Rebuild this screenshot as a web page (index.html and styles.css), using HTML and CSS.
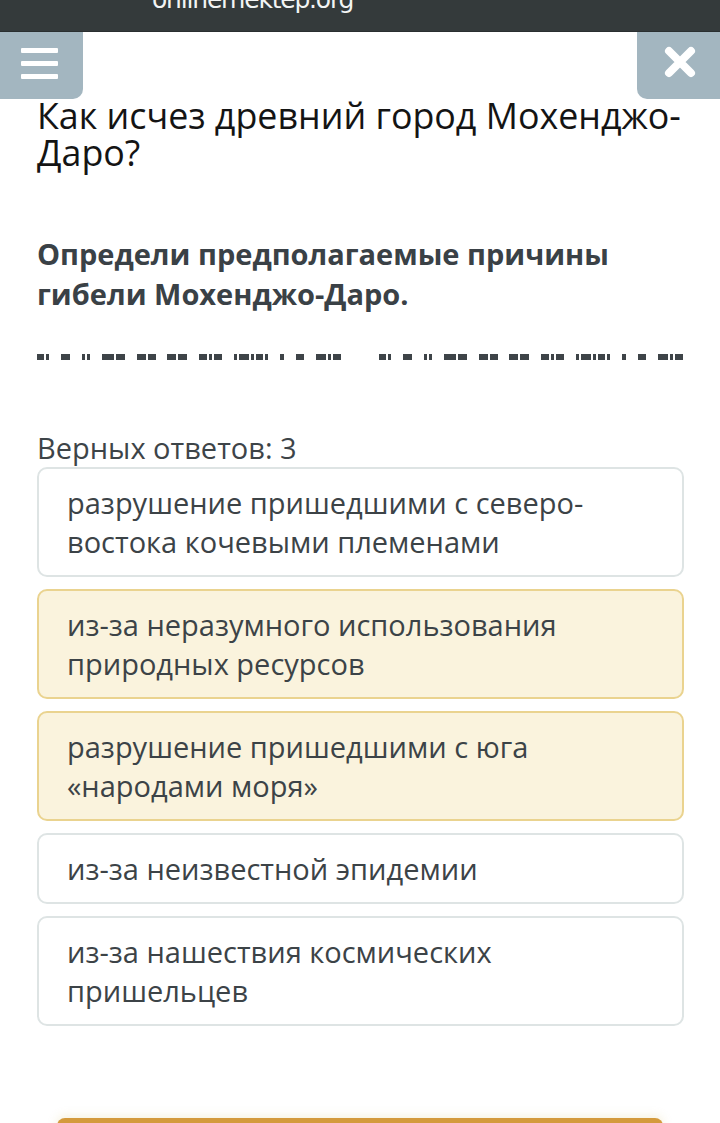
FILE: index.html
```html
<!DOCTYPE html>
<html lang="ru">
<head>
<meta charset="utf-8">
<title>Мохенджо-Даро</title>
<link rel="stylesheet" href="styles.css">
</head>
<body>
<header class="topbar"><span class="site">onlinemektep.org</span></header>
<div class="toolbar">
  <button class="tool menu" aria-label="menu">
    <span class="bar"></span><span class="bar"></span><span class="bar"></span>
  </button>
  <button class="tool close" aria-label="close">
    <svg width="32" height="32" viewBox="0 0 32 32"><path d="M5 5 L27 27 M27 5 L5 27" stroke="#fff" stroke-width="8" stroke-linecap="round"/></svg>
  </button>
</div>
<main class="content">
  <h1 class="title">Как исчез древний город Мохенджо-Даро?</h1>
  <p class="task">Определи предполагаемые причины гибели Мохенджо-Даро.</p>
  <div class="redacted">
    <div class="half">
      <span class="grp"><i style="width:7px"></i><i style="width:3px"></i></span>
      <span class="grp"><i style="width:9px"></i></span>
      <span class="grp"><i style="width:3px"></i><i style="width:3px"></i></span>
      <span class="grp"><i style="width:12px"></i><i style="width:9px"></i></span>
      <span class="grp"><i style="width:9px"></i><i style="width:8px"></i></span>
      <span class="grp"><i style="width:9px"></i><i style="width:9px"></i></span>
      <span class="grp"><i style="width:8px"></i><i style="width:3px"></i><i style="width:8px"></i></span>
      <span class="grp"><i style="width:3px"></i><i style="width:10px"></i><i style="width:3px"></i><i style="width:7px"></i><i style="width:3px"></i></span>
      <span class="grp"><i style="width:4px"></i></span>
      <span class="grp"><i style="width:8px"></i></span>
      <span class="grp"><i style="width:10px"></i><i style="width:3px"></i><i style="width:8px"></i></span>
    </div>
    <div class="half">
      <span class="grp"><i style="width:7px"></i><i style="width:3px"></i></span>
      <span class="grp"><i style="width:9px"></i></span>
      <span class="grp"><i style="width:3px"></i><i style="width:3px"></i></span>
      <span class="grp"><i style="width:12px"></i><i style="width:9px"></i></span>
      <span class="grp"><i style="width:9px"></i><i style="width:8px"></i></span>
      <span class="grp"><i style="width:9px"></i><i style="width:9px"></i></span>
      <span class="grp"><i style="width:8px"></i><i style="width:3px"></i><i style="width:8px"></i></span>
      <span class="grp"><i style="width:3px"></i><i style="width:10px"></i><i style="width:3px"></i><i style="width:7px"></i><i style="width:3px"></i></span>
      <span class="grp"><i style="width:4px"></i></span>
      <span class="grp"><i style="width:8px"></i></span>
      <span class="grp"><i style="width:10px"></i><i style="width:3px"></i><i style="width:8px"></i></span>
    </div>
  </div>
  <p class="count">Верных ответов: 3</p>
  <ul class="options">
    <li class="option">разрушение пришедшими с северо-востока кочевыми племенами</li>
    <li class="option selected">из-за неразумного использования природных ресурсов</li>
    <li class="option selected">разрушение пришедшими с юга «народами моря»</li>
    <li class="option">из-за неизвестной эпидемии</li>
    <li class="option">из-за нашествия космических пришельцев</li>
  </ul>
  <div class="submit-wrap"><div class="submit"></div></div>
</main>
</body>
</html>
```
FILE: styles.css
```css
* { box-sizing: border-box; }
html, body { margin: 0; padding: 0; background: #fff; }
body {
  font-family: "Open Sans", "Noto Sans", sans-serif;
  width: 720px;
  height: 1123px;
  overflow: hidden;
}
.topbar {
  height: 32px;
  background: #343a3b;
  overflow: hidden;
  border-bottom: 1px solid #2a2f30;
}
.site {
  display: block;
  margin-left: 152px;
  margin-top: -15px;
  font-family: "DejaVu Sans", sans-serif;
  font-size: 25px;
  line-height: 30px;
  letter-spacing: -1.2px;
  color: #f2f4f4;
}
.toolbar {
  display: flex;
  justify-content: space-between;
  height: 67px;
}
.tool {
  border: none;
  padding: 0;
  width: 83px;
  height: 67px;
  background: #a3b6c0;
  display: flex;
  align-items: center;
  justify-content: center;
}
.menu {
  flex-direction: column;
  gap: 8px;
  border-radius: 0 0 10px 0;
  padding-right: 4px;
  padding-bottom: 4px;
}
.bar {
  display: block;
  width: 37px;
  height: 5px;
  background: #fff;
  border-radius: 1px;
}
.close {
  border-radius: 0 0 0 10px;
  padding-left: 2px;
  padding-bottom: 8px;
}
.content {
  padding: 0 37px;
}
.title {
  margin: -2px -20px 0 0;
  font-weight: 400;
  font-size: 35.8px;
  line-height: 37px;
  color: #141414;
}
.task {
  margin: 63px 0 0;
  font-weight: 700;
  font-size: 29px;
  line-height: 40px;
  color: #3a4146;
}
.redacted {
  display: flex;
  justify-content: space-between;
  margin-top: 40px;
  height: 6px;
}
.half {
  display: flex;
  width: 304px;
  justify-content: space-between;
}
.grp {
  display: flex;
  gap: 2px;
}
.grp i {
  display: block;
  height: 6px;
  background: #3e4448;
}
.count {
  margin: 68px 0 0;
  font-size: 29px;
  line-height: 39px;
  color: #3d4448;
}
.options {
  list-style: none;
  margin: 0;
  padding: 0;
  display: flex;
  flex-direction: column;
  gap: 12px;
  width: 647px;
}
.option {
  border: 2px solid #dee4e4;
  border-radius: 10px;
  background: #fff;
  padding: 14px 28px;
  font-size: 29px;
  line-height: 39px;
  color: #3c4347;
}
.option.selected {
  background: #faf3dd;
  border-color: #ead38f;
}
.submit-wrap {
  margin-top: 92px;
  padding: 0 20px;
}
.submit {
  height: 30px;
  background: #d49a3c;
  border-radius: 8px 8px 0 0;
  box-shadow: 0 -2px 10px rgba(220, 200, 120, 0.25);
}
```
